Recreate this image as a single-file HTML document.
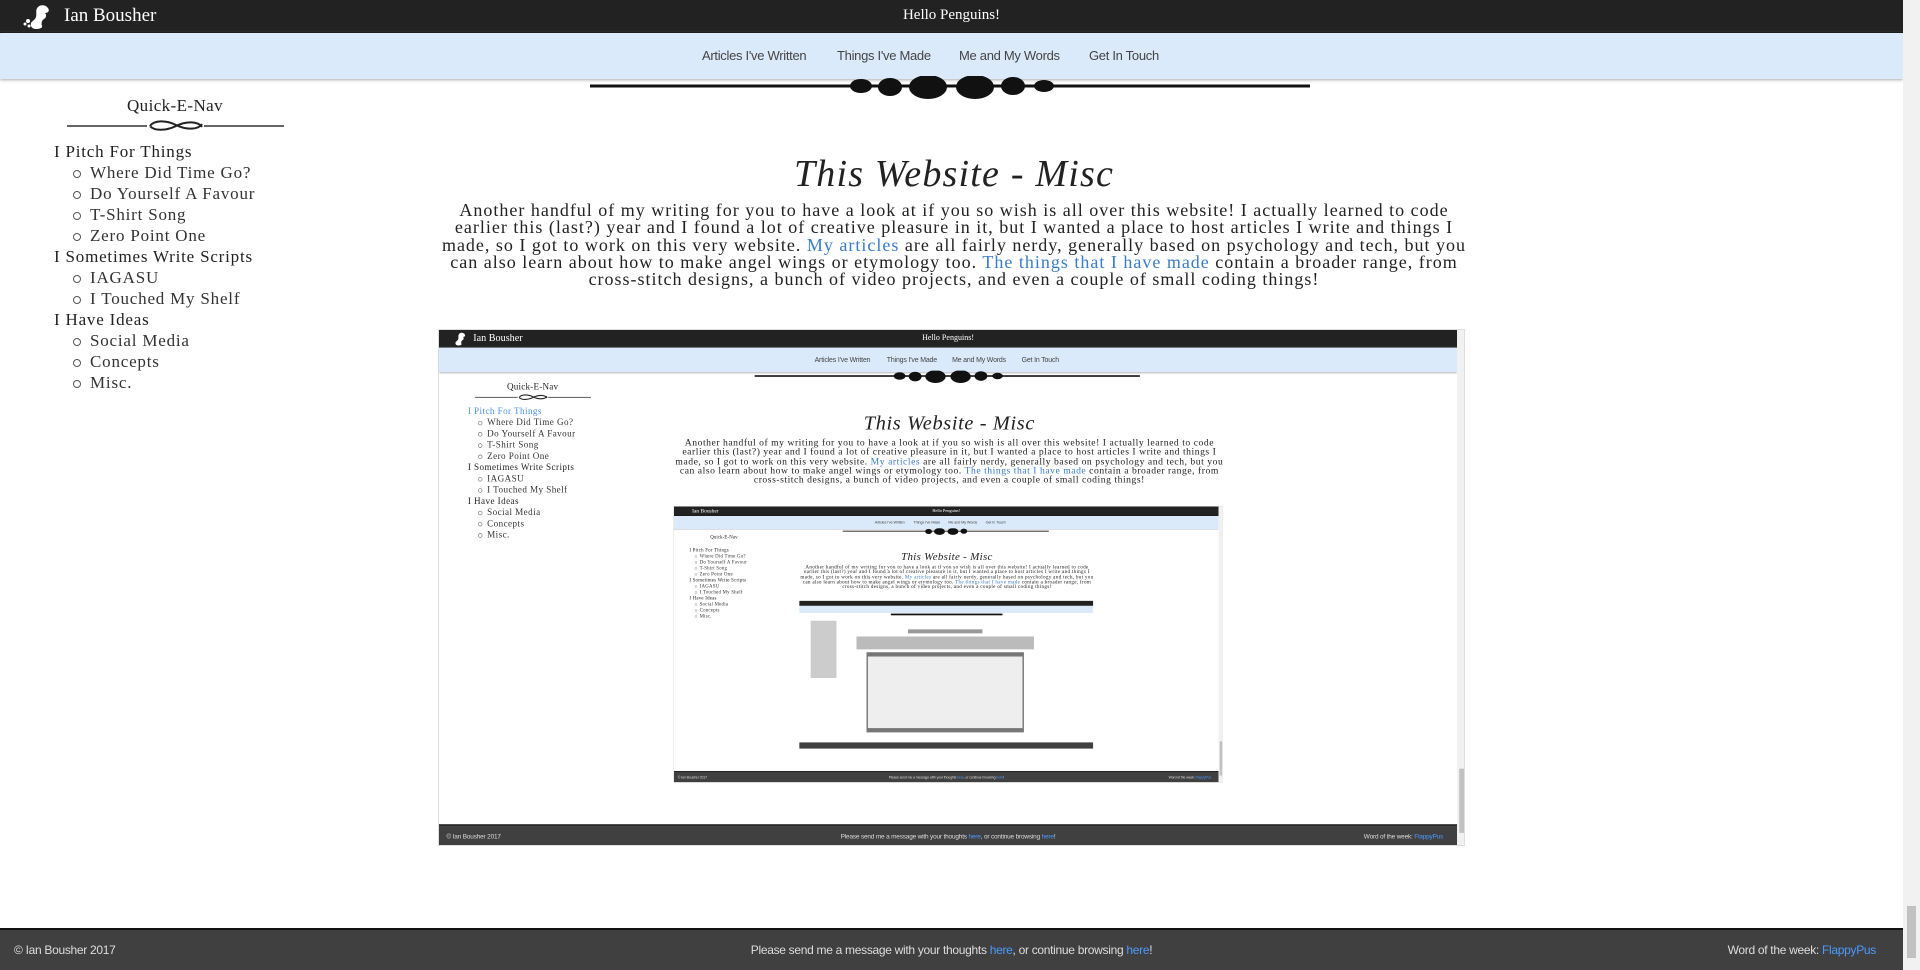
<!DOCTYPE html>
<html><head><meta charset="utf-8"><style>
*{margin:0;padding:0;box-sizing:border-box}
body{width:1920px;height:970px;overflow:hidden;background:#fff;position:relative;font-family:"Liberation Serif",serif;color:#222}
.pg{position:absolute;left:0;top:0;width:1920px;background:#fff;overflow:hidden}
.top{position:absolute;left:0;top:0;width:1903px;height:33px;background:#222;border-bottom:1px solid #000}
.nm{position:absolute;left:64px;top:5px;color:#fff;font-size:19px}
.hello{position:absolute;left:0;width:1903px;top:7px;text-align:center;color:#fff;font-size:15px}
.logo{position:absolute;left:22px;top:4px}
.nav{position:absolute;left:0;top:33px;width:1903px;height:46px;background:#dbeafb;box-shadow:0 1px 3px #aaa;font-family:"Liberation Sans",sans-serif;font-size:13px;letter-spacing:-.3px;color:#444}
.nav span{position:absolute;top:15px}
.div1{position:absolute;left:588px;top:76px}
.qn{position:absolute;left:75px;width:200px;top:96px;text-align:center;font-size:17px;letter-spacing:.4px}
.div2{position:absolute;left:66px;top:118px}
.side{position:absolute;left:54px;top:141px;font-size:17px;line-height:21px;letter-spacing:.8px;list-style:none}
.side li.s{padding-left:36px;position:relative;color:#333}
.side li.s:before{content:"";position:absolute;left:19px;top:8px;width:6px;height:6px;border:1.3px solid #555;border-radius:50%}
h1{position:absolute;left:443px;width:1022px;top:152px;text-align:center;font-style:italic;font-weight:normal;font-size:38px;letter-spacing:1.2px}
.p{position:absolute;left:400px;width:1108px;top:202px;text-align:center;font-size:18px;line-height:17.3px;letter-spacing:1px;white-space:nowrap}
a{color:#3a7bc8;text-decoration:none}
.shot{position:absolute;left:438px;top:329px;width:1027px;height:517px;overflow:hidden;border:1px solid #ddd}
.shot>.pg{transform:scale(.535);transform-origin:0 0}
.foot{position:absolute;left:0;bottom:0;width:1903px;height:42px;background:#404040;border-top:2px solid #111;font-family:"Liberation Sans",sans-serif;font-size:12px;letter-spacing:-.3px;color:#ddd}
.foot span{position:absolute;top:13px}
.foot a{color:#4a9bff}
.sb{position:absolute;right:0;top:0;width:17px;height:100%;background:#f1f1f1}
.sb i{position:absolute;left:4px;width:9px;background:#c1c1c1}
.blk{position:absolute;background:#999}
</style></head><body>

<div class="pg" style="height:970px">
 <div class="top"><svg class="logo" width="30" height="26" viewBox="0 0 30 26"><path d="M14 25c-4 0-6-3-5-6 1-2 4-3 5-6 1-4-1-7 2-10 3-3 8-2 10 1 2 3 0 5-3 5 2 2 1 5-1 6-2 1-3 4-2 7 1 2-3 3-6 3z" fill="#fff"/><circle cx="6" cy="17" r="2" fill="#fff"/><circle cx="3" cy="20" r="1.5" fill="#fff"/><circle cx="7" cy="22" r="1.5" fill="#fff"/></svg><span class="nm">Ian Bousher</span><div class="hello">Hello Penguins!</div></div>
 <div class="nav"><span style="left:702px">Articles I've Written</span><span style="left:837px">Things I've Made</span><span style="left:959px">Me and My Words</span><span style="left:1089px">Get In Touch</span></div>
 <svg class="div1" width="724" height="26" viewBox="0 0 724 26"><rect x="2" y="8.5" width="720" height="3" fill="#111"/><g fill="#111"><ellipse cx="273" cy="10" rx="11" ry="7"/><ellipse cx="302" cy="11" rx="12" ry="9"/><ellipse cx="340" cy="11" rx="19" ry="12"/><ellipse cx="387" cy="11" rx="19" ry="12"/><ellipse cx="425" cy="10" rx="12" ry="9"/><ellipse cx="456" cy="10" rx="10" ry="6"/></g></svg>
 <div class="qn">Quick-E-Nav</div>
 <svg class="div2" width="220" height="16" viewBox="0 0 220 16"><rect x="1" y="7" width="80" height="2" fill="#666"/><rect x="138" y="7" width="80" height="2" fill="#666"/><path d="M84 8c4-6 16-6 26-1s22 5 26-1M84 8c4 5 16 5 26 0s22-5 26 1" stroke="#222" stroke-width="2" fill="none"/></svg>
 <ul class="side"><li>I Pitch For Things</li><li class="s">Where Did Time Go?</li><li class="s">Do Yourself A Favour</li><li class="s">T-Shirt Song</li><li class="s">Zero Point One</li><li>I Sometimes Write Scripts</li><li class="s">IAGASU</li><li class="s">I Touched My Shelf</li><li>I Have Ideas</li><li class="s">Social Media</li><li class="s">Concepts</li><li class="s">Misc.</li></ul>
 <h1>This Website - Misc</h1>
 <div class="p">Another handful of my writing for you to have a look at if you so wish is all over this website! I actually learned to code<br>earlier this (last?) year and I found a lot of creative pleasure in it, but I wanted a place to host articles I write and things I<br>made, so I got to work on this very website. <a>My articles</a> are all fairly nerdy, generally based on psychology and tech, but you<br>can also learn about how to make angel wings or etymology too. <a>The things that I have made</a> contain a broader range, from<br>cross-stitch designs, a bunch of video projects, and even a couple of small coding things!</div>

 <div class="shot">
 <div class="pg" style="height:966px">
  <div class="top"><svg class="logo" width="30" height="26" viewBox="0 0 30 26"><path d="M14 25c-4 0-6-3-5-6 1-2 4-3 5-6 1-4-1-7 2-10 3-3 8-2 10 1 2 3 0 5-3 5 2 2 1 5-1 6-2 1-3 4-2 7 1 2-3 3-6 3z" fill="#fff"/></svg><span class="nm">Ian Bousher</span><div class="hello">Hello Penguins!</div></div>
  <div class="nav"><span style="left:702px">Articles I've Written</span><span style="left:837px">Things I've Made</span><span style="left:959px">Me and My Words</span><span style="left:1089px">Get In Touch</span></div>
  <svg class="div1" width="724" height="26" viewBox="0 0 724 26"><rect x="2" y="8.5" width="720" height="3" fill="#111"/><g fill="#111"><ellipse cx="273" cy="10" rx="11" ry="7"/><ellipse cx="302" cy="11" rx="12" ry="9"/><ellipse cx="340" cy="11" rx="19" ry="12"/><ellipse cx="387" cy="11" rx="19" ry="12"/><ellipse cx="425" cy="10" rx="12" ry="9"/><ellipse cx="456" cy="10" rx="10" ry="6"/></g></svg>
  <div class="qn">Quick-E-Nav</div>
  <svg class="div2" width="220" height="16" viewBox="0 0 220 16"><rect x="1" y="7" width="80" height="2" fill="#666"/><rect x="138" y="7" width="80" height="2" fill="#666"/><path d="M84 8c4-6 16-6 26-1s22 5 26-1M84 8c4 5 16 5 26 0s22-5 26 1" stroke="#222" stroke-width="2" fill="none"/></svg>
  <ul class="side"><li style="color:#4a8ef0">I Pitch For Things</li><li class="s">Where Did Time Go?</li><li class="s">Do Yourself A Favour</li><li class="s">T-Shirt Song</li><li class="s">Zero Point One</li><li>I Sometimes Write Scripts</li><li class="s">IAGASU</li><li class="s">I Touched My Shelf</li><li>I Have Ideas</li><li class="s">Social Media</li><li class="s">Concepts</li><li class="s">Misc.</li></ul>
  <h1>This Website - Misc</h1>
  <div class="p">Another handful of my writing for you to have a look at if you so wish is all over this website! I actually learned to code<br>earlier this (last?) year and I found a lot of creative pleasure in it, but I wanted a place to host articles I write and things I<br>made, so I got to work on this very website. <a>My articles</a> are all fairly nerdy, generally based on psychology and tech, but you<br>can also learn about how to make angel wings or etymology too. <a>The things that I have made</a> contain a broader range, from<br>cross-stitch designs, a bunch of video projects, and even a couple of small coding things!</div>
  <div class="shot">
  <div class="pg" style="height:966px">
   <div class="top"><span class="nm">Ian Bousher</span><div class="hello">Hello Penguins!</div></div>
   <div class="nav"><span style="left:702px">Articles I've Written</span><span style="left:837px">Things I've Made</span><span style="left:959px">Me and My Words</span><span style="left:1089px">Get In Touch</span></div>
   <svg class="div1" width="724" height="26" viewBox="0 0 724 26"><rect x="2" y="8.5" width="720" height="3" fill="#111"/><g fill="#111"><ellipse cx="302" cy="11" rx="12" ry="9"/><ellipse cx="340" cy="11" rx="19" ry="12"/><ellipse cx="387" cy="11" rx="19" ry="12"/><ellipse cx="425" cy="10" rx="12" ry="9"/></g></svg>
   <div class="qn">Quick-E-Nav</div>
   <ul class="side"><li>I Pitch For Things</li><li class="s">Where Did Time Go?</li><li class="s">Do Yourself A Favour</li><li class="s">T-Shirt Song</li><li class="s">Zero Point One</li><li>I Sometimes Write Scripts</li><li class="s">IAGASU</li><li class="s">I Touched My Shelf</li><li>I Have Ideas</li><li class="s">Social Media</li><li class="s">Concepts</li><li class="s">Misc.</li></ul>
   <h1>This Website - Misc</h1>
   <div class="p">Another handful of my writing for you to have a look at if you so wish is all over this website! I actually learned to code<br>earlier this (last?) year and I found a lot of creative pleasure in it, but I wanted a place to host articles I write and things I<br>made, so I got to work on this very website. <a>My articles</a> are all fairly nerdy, generally based on psychology and tech, but you<br>can also learn about how to make angel wings or etymology too. <a>The things that I have made</a> contain a broader range, from<br>cross-stitch designs, a bunch of video projects, and even a couple of small coding things!</div>
   <div class="shot" style="border:none">
    <div class="blk" style="left:0;top:0;width:1027px;height:18px;background:#222"></div>
    <div class="blk" style="left:0;top:18px;width:1027px;height:25px;background:#dbeafb"></div>
    <div class="blk" style="left:320px;top:45px;width:390px;height:6px;background:#111"></div>
    <div class="blk" style="left:40px;top:70px;width:90px;height:200px;background:#ccc"></div>
    <div class="blk" style="left:380px;top:100px;width:260px;height:14px;background:#999"></div>
    <div class="blk" style="left:200px;top:125px;width:620px;height:45px;background:#bbb"></div>
    <div class="blk" style="left:235px;top:180px;width:550px;height:280px;background:#777"></div>
    <div class="blk" style="left:240px;top:195px;width:540px;height:250px;background:#eee"></div>
    <div class="blk" style="left:0;top:495px;width:1027px;height:22px;background:#404040"></div>
   </div>
   <div class="foot"><span style="left:14px">© Ian Bousher 2017</span><span style="left:0;width:1903px;text-align:center">Please send me a message with your thoughts <a>here</a>, or continue browsing <a>here</a>!</span><span style="right:26px">Word of the week: <a>FlappyPus</a></span></div>
   <div class="sb"><i style="top:820px;height:120px"></i></div>
  </div>
  </div>
  <div class="foot"><span style="left:14px">© Ian Bousher 2017</span><span style="left:0;width:1903px;text-align:center">Please send me a message with your thoughts <a>here</a>, or continue browsing <a>here</a>!</span><span style="right:26px">Word of the week: <a>FlappyPus</a></span></div>
  <div class="sb"><i style="top:820px;height:120px"></i></div>
 </div>
 </div>

 <div class="foot"><span style="left:14px">© Ian Bousher 2017</span><span style="left:0;width:1903px;text-align:center">Please send me a message with your thoughts <a>here</a>, or continue browsing <a>here</a>!</span><span style="right:27px">Word of the week: <a>FlappyPus</a></span></div>
 <div class="sb"><i style="top:906px;height:52px"></i></div>
</div>
</body></html>
